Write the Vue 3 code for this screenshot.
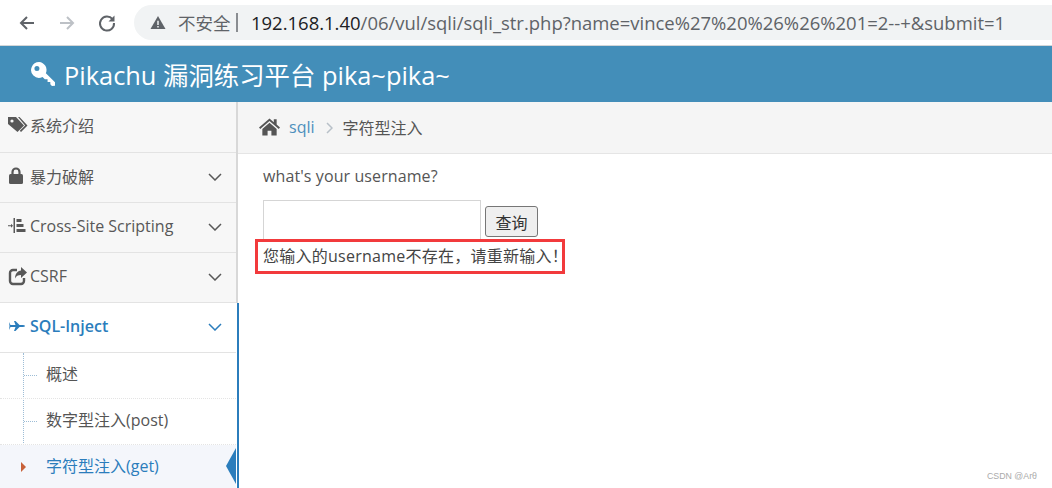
<template>
  <div class="page">
    <header class="chrome">
      <svg class="nav-ico" viewBox="0 0 20 20"><path d="M17 10H4M10 4l-6 6 6 6" fill="none" stroke="#5f6368" stroke-width="2"/></svg>
      <svg class="nav-ico" viewBox="0 0 20 20"><path d="M3 10h13M10 4l6 6-6 6" fill="none" stroke="#bdc1c6" stroke-width="2"/></svg>
      <svg class="nav-ico" viewBox="0 0 20 20"><path d="M15.500 6.200A7 7 0 1 0 17 10" fill="none" stroke="#5f6368" stroke-width="2"/><path d="M17.500 2.500v6h-6z" fill="#5f6368"/></svg>
      <div class="address">
        <svg class="warn" viewBox="0 0 16 16"><path d="M8 1l8 14H0z" fill="#5f6368"/><path d="M7.200 6h1.600v4.600H7.200zM7.200 11.600h1.600v1.600H7.200z" fill="#f1f3f4"/></svg>
        <span class="insecure">不安全</span>
        <span class="sep"></span>
        <span class="url"><b>192.168.1.40</b>/06/vul/sqli/sqli_str.php?name=vince%27%20%26%26%201=2--+&amp;submit=1</span>
      </div>
    </header>

    <div class="navbar">
      <svg class="key" viewBox="1.500 1.500 21 21"><path d="M8.600 1.500a7 7 0 0 0-5 11.900 7 7 0 0 0 8 1.300l2 2h2.400v2.400h2.400V21l1.400 1.400 2.700-.2.200-2.700-8.200-8.200a7 7 0 0 0-5.900-9.800zM6.700 5a2.200 2.200 0 1 1 0 4.400 2.200 2.200 0 0 1 0-4.400z" fill="#fff" fill-rule="evenodd"/></svg>
      <span>Pikachu 漏洞练习平台 pika~pika~</span>
    </div>

    <div class="body">
      <aside class="sidebar">
        <div v-for="m in menus" :key="m.name" class="menu" :class="{ open: m.open }">
          <svg class="m-ico" viewBox="0 0 20 20" v-html="m.icon"></svg>
          <span class="m-name">{{ m.name }}</span>
          <svg v-if="m.arrow" class="chev" viewBox="0 0 14 8"><path d="M1 1l6 6 6-6" fill="none" stroke="currentColor" stroke-width="1.500"/></svg>
        </div>
        <ul class="submenu">
          <li v-for="s in subs" :key="s.name" :class="{ active: s.active }">
            <span class="m-sub">{{ s.name }}</span>
          </li>
        </ul>
      </aside>

      <main class="main">
        <div class="crumbs">
          <svg class="home" viewBox="0 0 22 18"><path d="M11 0L0 9.500l1.300 1.500L11 2.700l9.700 8.300L22 9.500 18.500 6.500V1h-3v3z" fill="#555"/><path d="M11 4.500L3.500 11v7H9v-5h4v5h5.500v-7z" fill="#555"/></svg>
          <a class="link">sqli</a>
          <svg class="gt" viewBox="0 0 7 12"><path d="M1 1l5 5-5 5" fill="none" stroke="#b8c0c8" stroke-width="1.500"/></svg>
          <span class="here">字符型注入</span>
        </div>
        <div class="content">
          <p class="label">what's your username?</p>
          <form class="form" @submit.prevent>
            <input class="name" type="text" />
            <button class="query">查询</button>
          </form>
          <p class="msg">您输入的username不存在，请重新输入！<span class="hl"></span></p>
        </div>
        <span class="mark">CSDN @Arθ</span>
      </main>
    </div>
  </div>
</template>

<script setup>
const menus = [
  { name: '系统介绍', icon: '<path d="M0 2h8l8 8.500-6.500 6.500L0 9z" fill="currentColor"/><path d="M10 2h1.500l8 8.500-6.500 6.500-1.200-1.200 5.300-5.300z" fill="currentColor"/><circle cx="4" cy="6" r="1.600" fill="#f7f7f7"/>' },
  { name: '暴力破解', arrow: true, icon: '<path d="M4.500 8V6a3.500 3.500 0 0 1 7 0v2" fill="none" stroke="currentColor" stroke-width="2.200"/><rect x="1" y="8" width="14" height="10" rx="1.500" fill="currentColor"/>' },
  { name: 'Cross-Site Scripting', arrow: true, icon: '<path d="M5.500 2H7v15H5.500zM0 9.200h3.500v1H0z" fill="currentColor"/><path d="M3 7.700l2 2-2 2zM8.500 3h5v3h-5zM8.500 8h7v3h-7zM8.500 13h9v3h-9z" fill="currentColor"/>' },
  { name: 'CSRF', arrow: true, icon: '<path d="M9 4H5a3 3 0 0 0-3 3v8a3 3 0 0 0 3 3h8a3 3 0 0 0 3-3v-3" fill="none" stroke="currentColor" stroke-width="2.400"/><path d="M13 1l6 5.500-6 5.500V9c-3 0-5 1-6 3.500C7 8 9.500 5 13 4.500z" fill="currentColor"/>' },
  { name: 'SQL-Inject', arrow: true, open: true, icon: '<path d="M1 6l1.500 3h5L6 5h1.500l4 4h3.500c1.800 0 2 1 2 1s-.2 1-2 1h-3.500l-4 4H6l1.500-4h-5L1 14l.5-4z" fill="currentColor"/>' }
]

const subs = [
  { name: '概述' },
  { name: '数字型注入(post)' },
  { name: '字符型注入(get)', active: true }
]
</script>

<style>
html, body { margin: 0; background: #fff; overflow: hidden; }
</style>

<style scoped>
.page {
  width: 1052px;
  height: 488px;
  overflow: hidden;
  font-family: "Open Sans", "Noto Sans CJK SC", sans-serif;
  font-size: 16px;
  color: #555;
  display: flex;
  flex-direction: column;
}

.chrome {
  height: 45px;
  flex: none;
  display: flex;
  align-items: center;
  padding: 0 0 0 17px;
  border-bottom: 1px solid #d3d6d8;
}

.nav-ico {
  width: 20px;
  height: 20px;
  margin-right: 20px;
  flex: none;
}

.address {
  flex: 1;
  height: 35px;
  margin: 0 0 0 -3px;
  padding-left: 16px;
  background: #f1f3f4;
  border-radius: 18px 0 0 18px;
  display: flex;
  align-items: center;
  white-space: nowrap;
  overflow: hidden;
}

.warn {
  width: 16px;
  height: 15px;
  flex: none;
}

.insecure {
  margin-left: 12px;
  color: #5f6368;
  font-size: 17.500px;
}

.sep {
  width: 2px;
  height: 19px;
  background: #8a8d91;
  margin: 0 13px 0 5.500px;
}

.url {
  font-size: 18.480px;
  color: #5f6368;
}

.url b {
  font-weight: 400;
  color: #202124;
}

.navbar {
  height: 56px;
  flex: none;
  background: #438eb9;
  color: #fff;
  display: flex;
  align-items: center;
  padding-left: 31px;
  font-size: 25.400px;
}

.key {
  width: 24px;
  height: 24px;
  margin-right: 9px;
}

.body {
  flex: 1;
  display: flex;
  min-height: 0;
}

.sidebar {
  width: 236px;
  flex: none;
  background: #f7f7f7;
  border-right: 2px solid #d8d8d8;
  position: relative;
}

.menu {
  height: 50px;
  box-sizing: border-box;
  border-bottom: 1px solid #e3e3e3;
  display: flex;
  align-items: center;
  padding: 0 0 4px 8px;
  font-size: 16px;
  color: #585858;
}

.menu:first-child {
  height: 51px;
  padding-bottom: 5px;
}

.m-ico {
  width: 20px;
  height: 20px;
  flex: none;
  margin-right: 2px;
}

.m-name {
  flex: 1;
}

.chev {
  width: 14px;
  height: 8px;
  margin: 2px 14px 0 0;
}

.menu.open {
  background: #fff;
  color: #2b7dbc;
  font-weight: 600;
  box-shadow: 1px 0 0 #fff, 3px 0 0 #2b7dbc;
}

.submenu {
  list-style: none;
  margin: 0;
  padding: 0;
  background: #fff;
  box-shadow: 1px 0 0 #fff, 3px 0 0 #2b7dbc;
  position: relative;
  height: 140px;
}

.submenu::before {
  content: "";
  position: absolute;
  left: 23px;
  top: 0;
  bottom: 0;
  border-left: 1px dotted #9dbdd6;
}

.submenu li {
  height: 45px;
  box-sizing: content-box;
  border-bottom: 1px dotted #e4e4e4;
  display: flex;
  align-items: center;
  padding: 0 0 0 46px;
  font-size: 16px;
  position: relative;
}

.submenu li .m-sub {
  margin-top: -5px;
}

.submenu li::before {
  content: "";
  position: absolute;
  left: 24px;
  top: 22px;
  width: 13px;
  border-top: 1px dotted #9dbdd6;
}

.submenu li.active {
  background: #f4f6fb;
  color: #2b7dbc;
  border-bottom: 0;
}

.submenu li.active::before {
  left: 21px;
  top: 17px;
  width: 0;
  border-top: 5px solid transparent;
  border-bottom: 5px solid transparent;
  border-left: 5px solid #c86139;
}

.submenu li.active::after {
  content: "";
  position: absolute;
  right: 0;
  top: 3px;
  border-top: 18px solid transparent;
  border-bottom: 18px solid transparent;
  border-right: 10px solid #2b7dbc;
}

.main {
  flex: 1;
  position: relative;
  min-width: 0;
}

.crumbs {
  height: 52px;
  background: #f5f5f5;
  border-bottom: 1px solid #e5e5e5;
  display: flex;
  align-items: center;
  padding: 0 0 2px 21px;
  box-sizing: border-box;
}

.home {
  width: 21px;
  height: 18px;
  margin-right: 9px;
}

.link {
  color: #4c8fbd;
  font-size: 16px;
}

.gt {
  width: 7px;
  height: 12px;
  margin: 2px 10px 0 11px;
}

.here {
  font-size: 16px;
  color: #555;
}

.content {
  padding: 11px 0 0 25px;
}

.label {
  margin: 0;
  line-height: 22px;
  letter-spacing: 0.1px;
}

.form {
  display: flex;
  align-items: flex-end;
  margin-top: 13px;
}

.name {
  width: 218px;
  height: 42px;
  box-sizing: border-box;
  border: 1px solid #d5d5d5;
  padding: 0;
  background: #fff;
}

.query {
  width: 53px;
  height: 31px;
  margin: 0 0 5px 4px;
  padding: 0;
  background: #efefef;
  border: 1px solid #767676;
  border-radius: 3px;
  font-family: inherit;
  font-size: 16px;
  color: #333;
}

.msg {
  margin: 3px 0 0;
  position: relative;
  display: inline-block;
  line-height: 22px;
  font-size: 16px;
  letter-spacing: 0.25px;
  color: #444;
  white-space: nowrap;
}

.hl {
  position: absolute;
  left: -8px;
  right: 3px;
  top: -6px;
  bottom: -7px;
  border: 3px solid #f23a3c;
}

.mark {
  position: absolute;
  right: 15px;
  bottom: 7px;
  font-family: "Liberation Sans", sans-serif;
  font-size: 8.800px;
  color: #aaa;
}
</style>
